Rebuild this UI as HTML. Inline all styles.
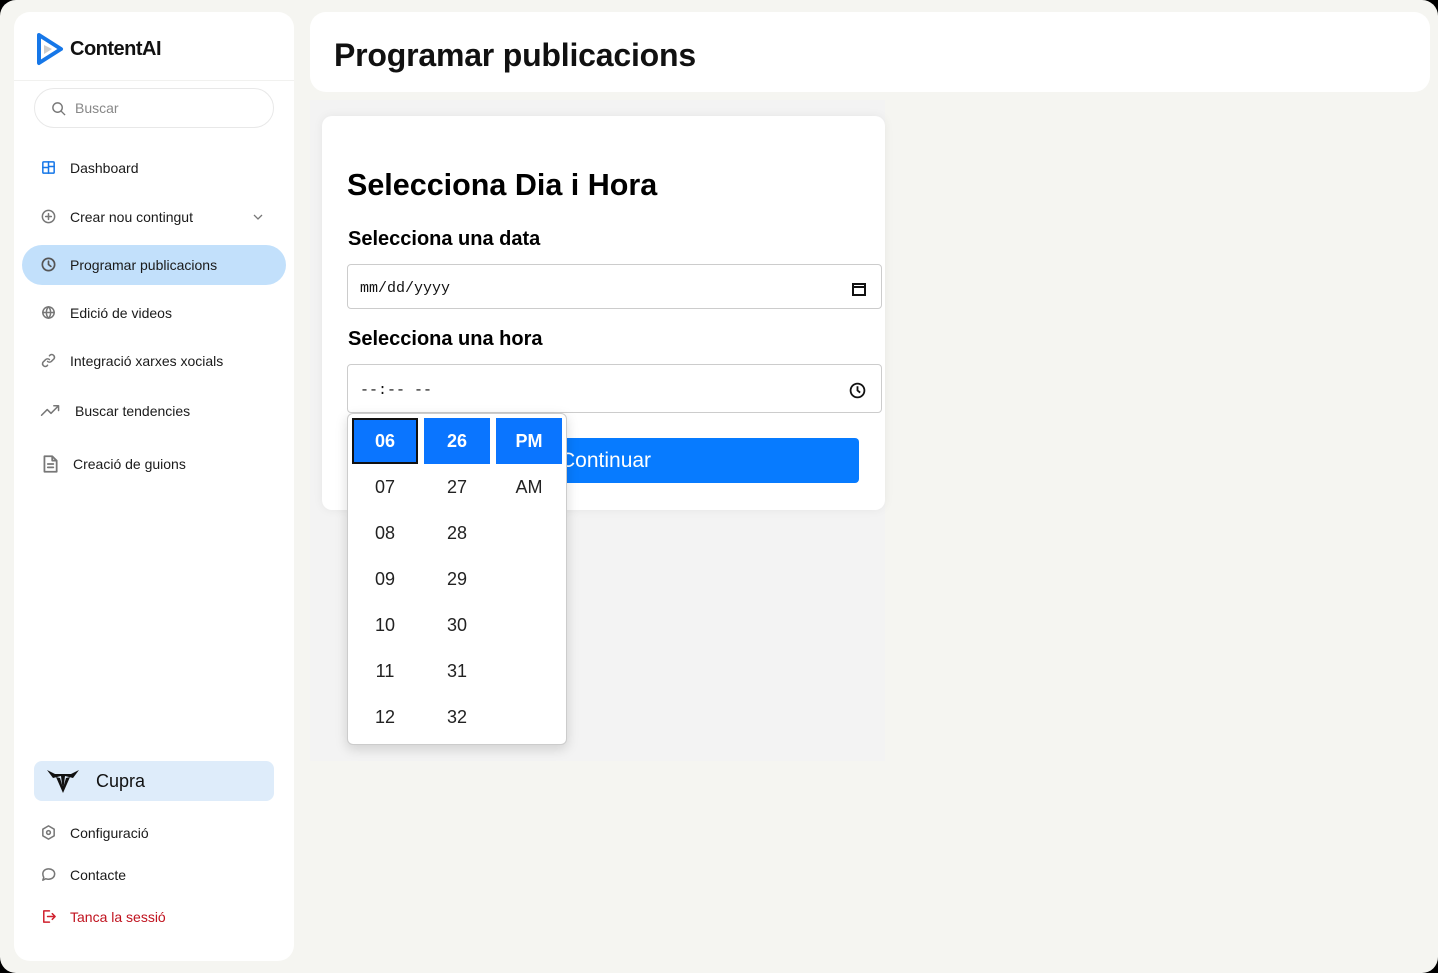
<!DOCTYPE html>
<html><head><meta charset="utf-8"><style>
*{box-sizing:border-box;margin:0;padding:0}
html,body{width:1438px;height:973px;overflow:hidden;background:#000}
.page{position:absolute;inset:0;background:#f5f5f1;border-radius:16px;overflow:hidden;font-family:"Liberation Sans",sans-serif}
.side{position:absolute;left:14px;top:12px;width:280px;height:949px;background:#fff;border-radius:16px}
.logo{position:absolute;left:22px;top:20px;display:flex;align-items:center;gap:6px;font-size:20px;font-weight:bold;color:#111;letter-spacing:-0.5px}
.div{position:absolute;left:0;right:0;top:68px;height:1px;background:#f1f1ef}
.search{position:absolute;left:20px;top:76px;width:240px;height:40px;border:1px solid #e8e8e8;border-radius:20px;display:flex;align-items:center;padding-left:16px;gap:9px;color:#888;font-size:14px}
.item{position:absolute;left:26px;display:flex;align-items:center;gap:13px;font-size:14px;color:#1a1a1a}
.item svg{width:17px;height:17px;fill:none;stroke:#777;stroke-width:1.6;stroke-linecap:round;stroke-linejoin:round}
.active{position:absolute;left:8px;top:233px;width:264px;height:40px;background:#c2e0fb;border-radius:20px}
.cupra{position:absolute;left:20px;top:749px;width:240px;height:40px;background:#deecfa;border-radius:8px;display:flex;align-items:center;padding-left:12px;gap:16px;font-size:18px;color:#111}
.head{position:absolute;left:310px;top:12px;width:1120px;height:80px;background:#fff;border-radius:16px}
.head h1{position:absolute;left:24px;top:25px;font-size:32px;font-weight:bold;color:#111;letter-spacing:-0.2px}
.gray{position:absolute;left:310px;top:100px;width:575px;height:661px;background:#f3f3f3}
.card{position:absolute;left:322px;top:116px;width:563px;height:394px;background:#fff;border-radius:10px;box-shadow:0 0 10px rgba(0,0,0,.06)}
.card h2{position:absolute;left:25px;top:52px;font-size:30.5px;font-weight:bold;color:#000}
.lbl{position:absolute;left:26px;font-size:20px;font-weight:bold;color:#000}
.inp{position:absolute;left:25px;width:535px;border:1px solid #ccc;border-radius:4px;font-family:"Liberation Mono",monospace;font-size:15px;color:#111;padding-left:12px;display:flex;align-items:center}
.btn{position:absolute;left:210px;top:322px;width:327px;height:45px;background:#077bff;border-radius:4px;color:#fff;font-size:21px;padding-left:28px;line-height:45px}
.pop{position:absolute;left:347px;top:413px;width:220px;height:332px;background:#fff;border:1px solid #ccc;border-radius:6px;box-shadow:0 4px 12px rgba(0,0,0,.15)}
.cell{position:absolute;width:66px;height:46px;text-align:center;line-height:46px;font-size:18px;color:#222}
.sel{background:#0a75ff;color:#fff;font-weight:bold}
</style></head><body><div class="page">
<div class="side">
 <div class="logo"><svg width="28" height="34" viewBox="0 0 28 34"><path d="M3 3 L25 17 L3 31 Z" fill="none" stroke="#1677e8" stroke-width="4" stroke-linejoin="round"/><path d="M8 13 L16 17 L8 22Z" fill="#ccc"/></svg>ContentAI</div>
 <div class="div"></div>
 <div class="search"><svg width="15" height="15" viewBox="0 0 16 16" fill="none" stroke="#777" stroke-width="1.5"><circle cx="7" cy="7" r="5"/><path d="M11 11l4 4"/></svg>Buscar</div>
 <div class="active"></div>
 <div class="item" style="top:147px"><svg viewBox="0 0 18 18" style="stroke:#1677e8"><rect x="3" y="3" width="12" height="12" rx="1"/><path d="M9 3v12M3 9h6M9 8l6 0"/></svg>Dashboard</div>
 <div class="item" style="top:196px"><svg viewBox="0 0 18 18"><circle cx="9" cy="9" r="6.5"/><path d="M9 6v6M6 9h6"/></svg>Crear nou contingut</div>
 <svg style="position:absolute;left:238px;top:200px" width="12" height="10" viewBox="0 0 12 10" fill="none" stroke="#777" stroke-width="1.3"><path d="M2 3l4 4 4-4"/></svg>
 <div class="item" style="top:244px"><svg viewBox="0 0 18 18" style="stroke:#555;stroke-width:1.8"><circle cx="9" cy="9" r="6.5"/><path d="M9 5.5V9l2.5 2"/></svg>Programar publicacions</div>
 <div class="item" style="top:292px"><svg viewBox="0 0 18 18"><circle cx="9" cy="9" r="6"/><path d="M3 9h12M9 3c-3 3-3 9 0 12M9 3c3 3 3 9 0 12"/></svg>Edició de videos</div>
 <div class="item" style="top:340px"><svg viewBox="0 0 18 18"><path d="M8 10a3 3 0 0 0 4 0l3-3a3 3 0 0 0-4-4l-1 1M10 8a3 3 0 0 0-4 0l-3 3a3 3 0 0 0 4 4l1-1"/></svg>Integració xarxes xocials</div>
 <div class="item" style="top:390px"><svg viewBox="0 0 22 18" style="width:22px"><path d="M1 14l6-6 4 4 8-8M14 4h5v5"/></svg>Buscar tendencies</div>
 <div class="item" style="top:442px"><svg viewBox="0 0 18 18" style="width:20px;height:20px"><path d="M4 2h7l4 4v10H4z M11 2v4h4M7 9h5M7 12h5"/></svg>Creació de guions</div>
 <div class="cupra"><svg width="34" height="26" viewBox="0 0 34 26"><path d="M1 2 L9 6 L25 6 L33 2 L27 10 L19 8 L17 24 L15 8 L7 10 Z" fill="#111"/><path d="M10 9 L17 25 L24 9 L20 10 L17 20 L14 10Z" fill="#111"/></svg>Cupra</div>
 <div class="item" style="top:812px"><svg viewBox="0 0 18 18"><path d="M9 2l6 3.5v7L9 16l-6-3.5v-7z"/><circle cx="9" cy="9" r="2"/></svg>Configuració</div>
 <div class="item" style="top:854px"><svg viewBox="0 0 18 18"><path d="M9 3c4 0 6.5 2.5 6.5 5.5S13 14 9 14c-1 0-2-.2-3-.5L3 15l1-3c-.6-1-1-2-1-3.5C3 5.5 5 3 9 3z"/></svg>Contacte</div>
 <div class="item" style="top:896px;color:#c0121e"><svg viewBox="0 0 18 18" style="stroke:#d0212e"><path d="M10 3H4v12h6M8 9h8M13 6l3 3-3 3"/></svg>Tanca la sessió</div>
</div>
<div class="head"><h1>Programar publicacions</h1></div>
<div class="gray"></div>
<div class="card">
 <h2>Selecciona Dia i Hora</h2>
 <div class="lbl" style="top:112px">Selecciona una data</div>
 <div class="inp" style="top:148px;height:45px;padding-top:4px">mm/dd/yyyy<svg style="position:absolute;right:14px" width="16" height="16" viewBox="0 0 16 16" fill="none" stroke="#111" stroke-width="2"><rect x="2" y="3" width="12" height="11"/><path d="M2 6h12"/></svg></div>
 <div class="lbl" style="top:212px">Selecciona una hora</div>
 <div class="inp" style="top:248px;height:49px;padding-top:4px">--:-- --<svg style="position:absolute;right:15px" width="17" height="17" viewBox="0 0 16 16" fill="none" stroke="#111" stroke-width="1.7"><circle cx="8" cy="8" r="6.5"/><path d="M8 4v4l2.5 2"/></svg></div>
 <div class="btn">Continuar</div>
</div>
<div class="pop">
 <div class="cell sel" style="left:4px;top:4px;border:2px solid #111;line-height:42px">06</div>
 <div class="cell sel" style="left:76px;top:4px">26</div>
 <div class="cell sel" style="left:148px;top:4px">PM</div>
 <div class="cell" style="left:4px;top:50px">07</div><div class="cell" style="left:76px;top:50px">27</div><div class="cell" style="left:148px;top:50px">AM</div>
 <div class="cell" style="left:4px;top:96px">08</div><div class="cell" style="left:76px;top:96px">28</div>
 <div class="cell" style="left:4px;top:142px">09</div><div class="cell" style="left:76px;top:142px">29</div>
 <div class="cell" style="left:4px;top:188px">10</div><div class="cell" style="left:76px;top:188px">30</div>
 <div class="cell" style="left:4px;top:234px">11</div><div class="cell" style="left:76px;top:234px">31</div>
 <div class="cell" style="left:4px;top:280px">12</div><div class="cell" style="left:76px;top:280px">32</div>
</div>
</div></body></html>
